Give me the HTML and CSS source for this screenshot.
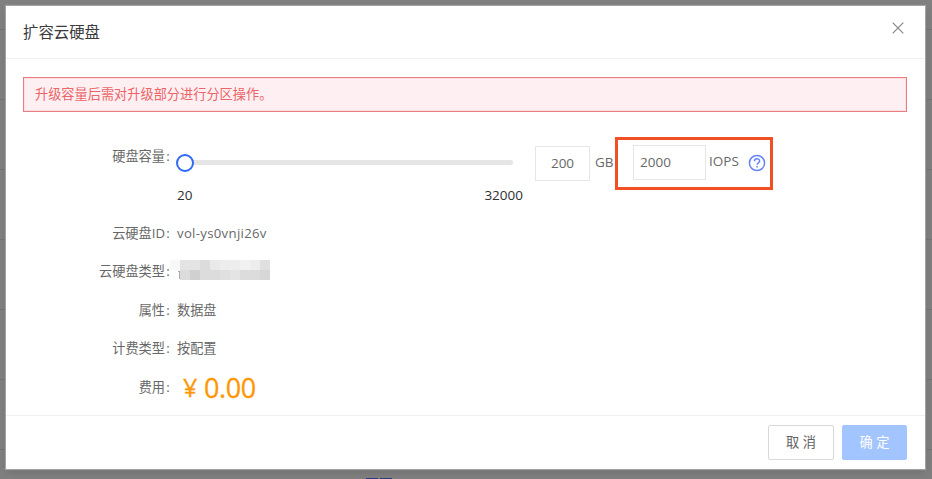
FILE: index.html
```html
<!DOCTYPE html>
<html lang="zh-CN">
<head>
<meta charset="utf-8">
<title>扩容云硬盘</title>
<link rel="stylesheet" href="styles.css">
</head>
<body>
<div class="page-mark"><i></i><i></i></div>
<main class="dialog">
  <header class="head">
    <h1>扩容云硬盘</h1>
    <svg class="close" viewBox="0 0 12 12"><path d="M.7.7l10.6 10.6M11.3.7L.7 11.3"/></svg>
  </header>
  <section class="body">
    <div class="alert">升级容量后需对升级部分进行分区操作。</div>
    <div class="capacity">
      <div class="label cap-label">硬盘容量<b>:</b></div>
      <div class="slider">
        <div class="track"><span class="thumb"></span></div>
        <div class="range"><span>20</span><span>32000</span></div>
      </div>
      <div class="input size">200</div>
      <span class="unit">GB</span>
      <div class="iops">
        <div class="input">2000</div>
        <span class="iops-unit">IOPS</span>
        <svg class="help" viewBox="0 0 18 18"><circle cx="9" cy="9" r="7.6"/><path d="M6.5 7.2C6.5 3.9 11.6 3.9 11.6 7c0 1.8-2.5 1.8-2.5 3.8M9.1 12v1.6"/></svg>
      </div>
    </div>
    <div class="row"><div class="label">云硬盘ID<b>:</b></div><div class="id">vol-ys0vnji26v</div></div>
    <div class="row"><div class="label">云硬盘类型<b>:</b></div>
      <div class="mosaic">
        <i class="g1"></i><i class="g4"></i><i class="g4"></i><i class="g6"></i><i class="g3"></i><i class="g2"></i><i class="g2"></i><i class="g1b"></i><i class="g2"></i><i class="g5"></i>
        <i class="edge"></i><i class="g6"></i><i class="g7"></i><i class="g6"></i><i class="g6"></i><i class="g5"></i><i class="g4"></i><i class="g6"></i><i class="g6"></i><i class="g65"></i>
      </div>
    </div>
    <div class="row"><div class="label">属性<b>:</b></div><div>数据盘</div></div>
    <div class="row"><div class="label">计费类型<b>:</b></div><div>按配置</div></div>
    <div class="row"><div class="label">费用<b>:</b></div><div class="price"><span>¥</span>0.00</div></div>
  </section>
  <footer class="foot">
    <button class="btn">取 消</button>
    <button class="btn primary">确 定</button>
  </footer>
</main>
</body>
</html>
```
FILE: styles.css
```css
* { box-sizing: border-box; }
body {
  margin: 0;
  width: 932px;
  height: 479px;
  padding: 6px 7px 0 6px;
  overflow: hidden;
  background: repeating-linear-gradient(#808080 0 69px, #747476 69px 70px) 0 -40px / 100% 600px;
  font: 13.2px/20px "Open Sans", "Noto Sans CJK SC", sans-serif;
  color: #686868;
}
.page-mark {
  position: absolute;
  left: 366px;
  top: 478px;
  display: flex;
  gap: 2px;
}
.page-mark i { width: 12px; height: 1px; background: #253a80; }
.dialog {
  display: flex;
  flex-direction: column;
  height: 463px;
  background: #fff;
  box-shadow: 0 0 1px 1px rgba(180, 180, 180, .7), 0 3px 9px rgba(0, 0, 0, .15);
}
.head {
  display: flex;
  justify-content: space-between;
  height: 53px;
  padding: 15px 21px 0 17px;
  border-bottom: 1px solid #f0f0f0;
}
h1 { margin: 0; font-size: 15.4px; line-height: 24px; font-weight: 400; color: #3c3c3c; }
.close { width: 12px; height: 12px; margin-top: 1px; fill: none; stroke: #858585; stroke-width: 1.2; }
.body { height: 356px; padding: 18px 18px 0 17px; }
.alert {
  height: 35px;
  padding: 0 11px;
  border: 1px solid #e97e82;
  box-shadow: inset 0 0 0 1px #fbdfe2;
  background: #fef0f2;
  color: #ea6468;
  line-height: 33px;
}
.capacity { display: flex; height: 102px; padding-top: 25px; }
.label { width: 148px; margin-right: 6px; text-align: right; white-space: nowrap; }
.label b { display: inline-block; width: 6px; font-weight: 400; text-align: center; }
.cap-label { padding-top: 9px; }
.slider { width: 346px; padding-top: 23px; color: #303030; }
.track { display: flex; align-items: center; width: 336px; height: 5px; border-radius: 3px; background: #e5e5e5; }
.thumb { flex: none; width: 18px; height: 18px; margin-left: -1px; border: 2px solid #2f69f6; border-radius: 50%; background: #fff; }
.range { display: flex; justify-content: space-between; margin-top: 20px; font-size: 13.5px; }
.input { height: 35px; border: 1px solid #e6e6e6; line-height: 33px; padding-left: 6px; font-size: 13.5px; }
.size { width: 55px; margin: 9px 0 0 12px; padding: 0; text-align: center; }
.unit { width: 20px; margin: 15px 0 0 5px; font-size: 13.5px; }
.iops {
  display: flex;
  width: 158px;
  height: 53px;
  padding: 5px 0 0 15px;
  border: 3px solid #f05023;
}
.iops .input { width: 73px; }
.iops-unit { width: 31px; margin: 6px 0 0 3px; font-size: 13.5px; }
.help { width: 18px; height: 18px; margin: 9px 0 0 8px; fill: none; stroke: #6685f8; stroke-width: 1.5; }
.row { display: flex; height: 38.4px; padding-top: 9px; }
.id { letter-spacing: .3px; }
.mosaic { display: grid; grid-template-columns: repeat(10, 10px); grid-auto-rows: 10px; margin: -1px 0 0 -7px; }
.edge { justify-self: end; width: 2px; height: 8px; margin-top: 1px; border-right: 1px solid #aaa; border-top: 1px solid #aaa; }
.g1 { background: #f8f8f8; }
.g1b { background: #f1f1f1; }
.g2 { background: #ededed; }
.g3 { background: #e9e9e9; }
.g4 { background: #e4e4e4; }
.g5 { background: #e0e0e0; }
.g6 { background: #dcdcdc; }
.g65 { background: #d7d7d7; }
.g7 { background: #d0d0d0; }
.price { display: flex; padding-left: 6px; font-size: 27px; line-height: 21px; color: #fd9706; letter-spacing: -.4px; -webkit-text-stroke: .3px #fd9706; }
.price span { width: 21px; font-size: 25px; }
.foot {
  display: flex;
  justify-content: flex-end;
  gap: 8px;
  height: 54px;
  padding: 9px 18px 0 0;
  border-top: 1px solid #f0f0f0;
}
.btn {
  width: 66px;
  height: 35px;
  padding: 0 0 2px;
  border: 1px solid #d9d9d9;
  border-radius: 2px;
  background: #fff;
  color: #606060;
  font: inherit;
}
.primary { width: 65px; background: #a3c5ff; border-color: #a3c5ff; color: #fff; }
```
